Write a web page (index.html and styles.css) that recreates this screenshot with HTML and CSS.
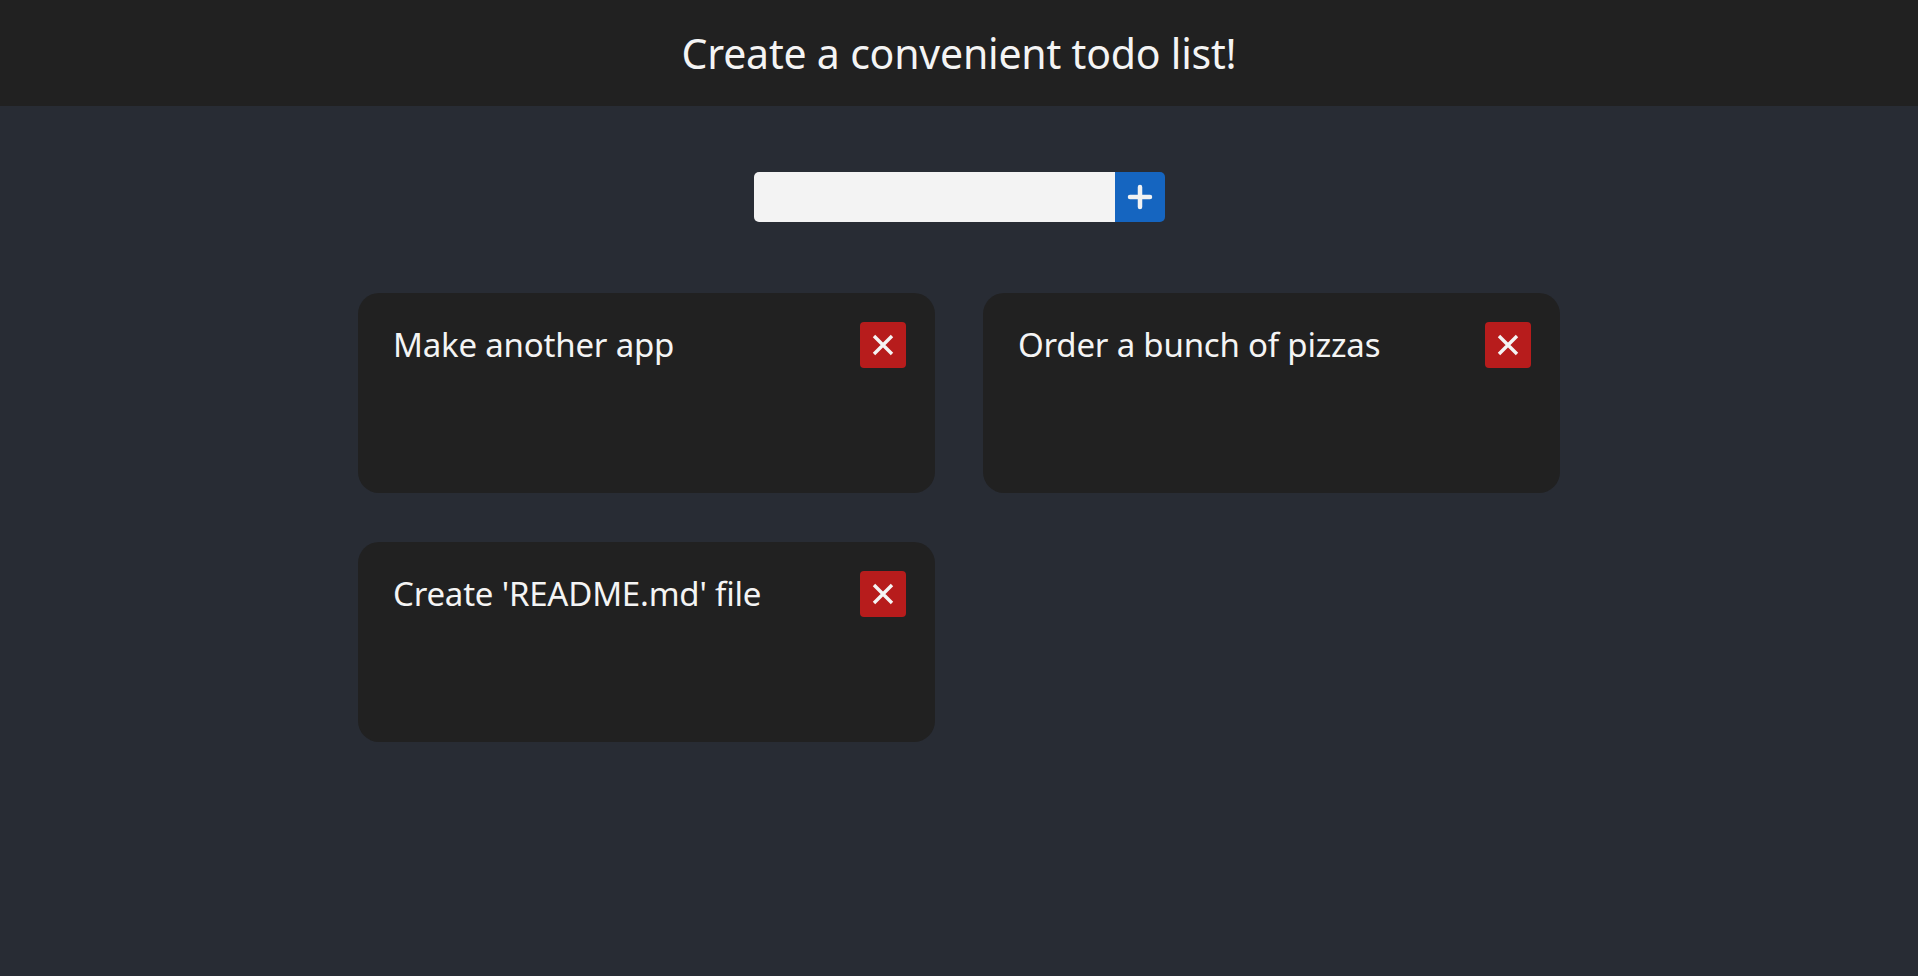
FILE: index.html
```html
<!DOCTYPE html>
<html lang="en">
<head>
<meta charset="utf-8">
<title>Todo</title>
<link rel="stylesheet" href="styles.css">
</head>
<body>
<header class="header">
  <h1 class="title">Create a convenient todo list!</h1>
</header>
<main class="main">
  <form class="add-form">
    <input class="add-input" type="text">
    <button class="add-btn" type="button" aria-label="Add">
      <svg width="26" height="26" viewBox="0 0 26 26"><path d="M13 3v20M3 13h20" stroke="#f2f2f2" stroke-width="4.5" stroke-linecap="round" fill="none"/></svg>
    </button>
  </form>
  <section class="grid">
    <div class="card">
      <span class="card-text">Make another app</span>
      <button class="del-btn" type="button" aria-label="Delete">
        <svg width="24" height="24" viewBox="0 0 24 24"><path d="M3 3l18 18M21 3L3 21" stroke="#f4f4f4" stroke-width="3.4" fill="none"/></svg>
      </button>
    </div>
    <div class="card">
      <span class="card-text">Order a bunch of pizzas</span>
      <button class="del-btn" type="button" aria-label="Delete">
        <svg width="24" height="24" viewBox="0 0 24 24"><path d="M3 3l18 18M21 3L3 21" stroke="#f4f4f4" stroke-width="3.4" fill="none"/></svg>
      </button>
    </div>
    <div class="card">
      <span class="card-text">Create 'README.md' file</span>
      <button class="del-btn" type="button" aria-label="Delete">
        <svg width="24" height="24" viewBox="0 0 24 24"><path d="M3 3l18 18M21 3L3 21" stroke="#f4f4f4" stroke-width="3.4" fill="none"/></svg>
      </button>
    </div>
  </section>
</main>
</body>
</html>
```
FILE: styles.css
```css
* { box-sizing: border-box; }
html, body { margin: 0; padding: 0; }
body {
  background: #282c34;
  font-family: "Noto Sans", "Open Sans", sans-serif;
  color: #f4f4f4;
  min-height: 976px;
}
.header {
  background: #212121;
  height: 106px;
  display: flex;
  align-items: center;
  justify-content: center;
}
.title {
  margin: 0;
  font-weight: 400;
  font-size: 41px;
  letter-spacing: -0.2px;
  color: #f4f4f4;
}
.main {
  display: flex;
  flex-direction: column;
  align-items: center;
  padding-top: 66px;
}
.add-form {
  display: flex;
  height: 50px;
  margin: 0;
}
.add-input {
  width: 361px;
  height: 50px;
  border: none;
  background: #f3f3f3;
  border-radius: 5px 0 0 5px;
  padding: 0 12px;
  font-size: 20px;
  outline: none;
}
.add-btn {
  width: 50px;
  height: 50px;
  border: none;
  background: #1565c0;
  border-radius: 0 5px 5px 0;
  display: flex;
  align-items: center;
  justify-content: center;
  padding: 0;
}
.grid {
  margin-top: 71px;
  display: grid;
  grid-template-columns: 577px 577px;
  column-gap: 48px;
  row-gap: 49px;
}
.card {
  background: #212121;
  height: 200px;
  border-radius: 21px;
  padding: 29px 29px 0 35px;
  display: flex;
  justify-content: space-between;
  align-items: flex-start;
}
.card-text {
  font-size: 33px;
  line-height: 46px;
  letter-spacing: -0.2px;
  color: #f4f4f4;
}
.del-btn {
  width: 46px;
  height: 46px;
  border: none;
  background: #b71c1c;
  border-radius: 4px;
  display: flex;
  align-items: center;
  justify-content: center;
  padding: 0;
  flex-shrink: 0;
}
```
